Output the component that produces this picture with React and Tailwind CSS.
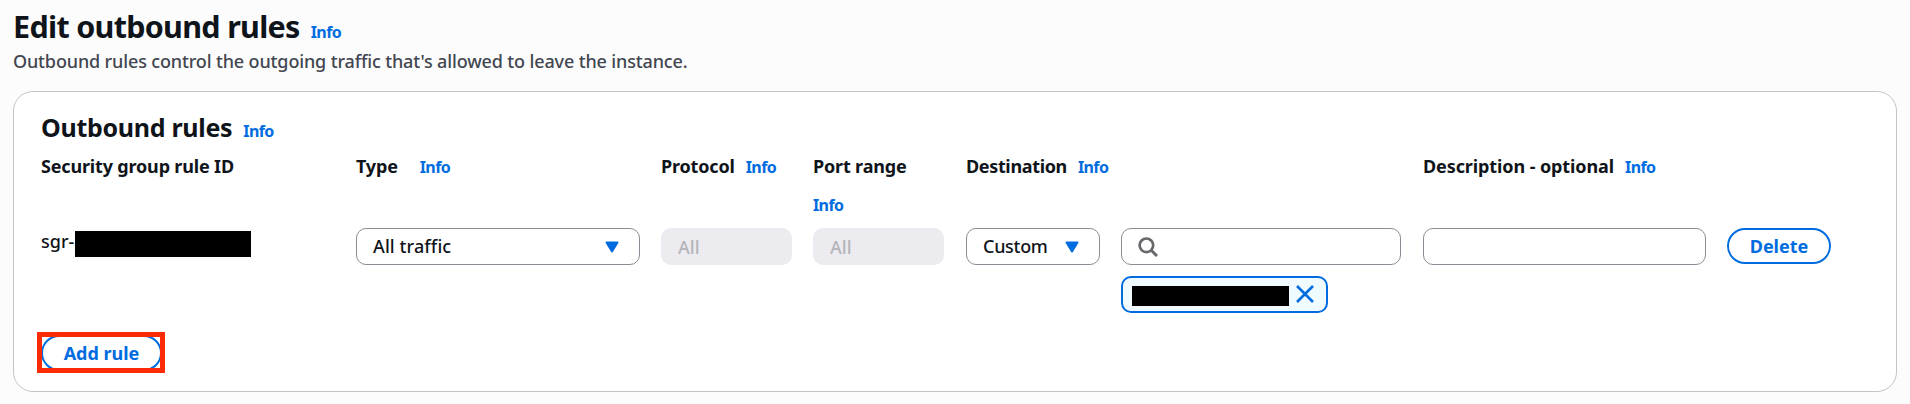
import React from "react";

function Info() {
  return (
    <a className="text-[16px] leading-[24px] font-bold tracking-[-0.6px] text-[#006ce0]">Info</a>
  );
}

function HeaderCell({ label, gap = "gap-x-[11px]", tracking = "tracking-[-0.17px]", className = "" }) {
  return (
    <div className={`flex flex-wrap content-start items-baseline gap-y-[8px] whitespace-nowrap ${gap} ${className}`}>
      <span className={`text-[18px] leading-[38px] font-bold ${tracking}`}>{label}</span>
      <Info />
    </div>
  );
}

function Caret() {
  return (
    <svg className="h-[12px] w-[14px] shrink-0" viewBox="0 0 14 12" aria-hidden="true">
      <path d="M1.5 1.5h11L7 10.5z" fill="#006ce0" stroke="#006ce0" strokeWidth="2" strokeLinejoin="round" />
    </svg>
  );
}

function Select({ value, className = "", tracking = "" }) {
  return (
    <div className={`flex h-[37px] items-center justify-between rounded-[10px] border border-[#8c8c94] bg-white pl-[16px] ${className}`}>
      <span className={`text-[18px] font-medium ${tracking}`}>{value}</span>
      <Caret />
    </div>
  );
}

function DisabledInput({ value }) {
  return (
    <div className="flex h-[37px] w-[131px] items-center rounded-[10px] bg-[#ebebf0] pt-px pl-[17px] text-[18px] font-medium text-[#b4b4bb]">
      {value}
    </div>
  );
}

export default function App() {
  return (
    <main className="flex h-[404px] w-[1910px] flex-col overflow-hidden bg-[#fcfcfc] pt-[8px] pl-[13px] font-['Noto_Sans',sans-serif] text-[#0f141a]">
      <h1 className="flex items-baseline gap-[11px] text-[30.5px] leading-[36px] font-bold tracking-[-0.7px]">
        Edit outbound rules
        <Info />
      </h1>
      <p className="mt-[5px] text-[18px] leading-[24px] font-medium tracking-[-0.14px] text-[#424650]">
        Outbound rules control the outgoing traffic that's allowed to leave the instance.
      </p>

      <section className="mt-[18px] h-[301px] w-[1884px] rounded-[20px] border border-[#c4c4c8] bg-white pt-[19px] pl-[27px]">
        <h2 className="flex items-baseline gap-[11px] text-[25px] leading-[32px] font-bold tracking-[-0.3px]">
          Outbound rules
          <Info />
        </h2>

        <div className="mt-[4px] grid grid-cols-[294px_284px_131px_132px_134px_281px_283px_104px] grid-rows-[81px_104px] gap-x-[21px]">
          <div className="text-[18px] leading-[38px] font-bold tracking-[-0.17px]">Security group rule ID</div>
          <HeaderCell label="Type" gap="gap-x-[22px]" />
          <HeaderCell label="Protocol" />
          <HeaderCell label="Port range" />
          <HeaderCell label="Destination" tracking="tracking-[-0.35px]" className="col-span-2" />
          <HeaderCell label="Description - optional" tracking="tracking-[-0.1px]" className="col-span-2" />

          <div className="flex items-start text-[18px] leading-[26px] font-medium">
            <span className="w-[34px]">sgr-</span>
            <span className="mt-[3px] h-[26px] w-[176px] bg-black" />
          </div>
          <Select value="All traffic" className="pr-[20px]" tracking="tracking-[0.1px]" />
          <DisabledInput value="All" />
          <DisabledInput value="All" />
          <Select value="Custom" className="pr-[20px]" tracking="tracking-[-0.3px]" />
          <div>
            <div className="flex h-[37px] w-[280px] items-center rounded-[10px] border border-[#8c8c94] bg-white pl-[16px]">
              <svg className="size-[20px]" viewBox="0 0 20 20" fill="none" stroke="#66686c" aria-hidden="true">
                <circle cx="8.4" cy="8.3" r="6.8" strokeWidth="2.7" />
                <path d="M13 13l6 6" strokeWidth="3" />
              </svg>
            </div>
            <div className="mt-[11px] flex h-[37px] w-[207px] items-start rounded-[10px] border-2 border-[#006ce0] bg-[#f0fbff] pl-[9px]">
              <span className="mt-[8px] h-[20px] w-[157px] bg-black" />
              <svg className="mt-[7px] ml-[7px] size-[18px]" viewBox="0 0 18 18" fill="none" stroke="#006ce0" strokeWidth="2.6" aria-hidden="true">
                <path d="M1 1l16 16M17 1L1 17" />
              </svg>
            </div>
          </div>
          <div className="h-[37px] rounded-[10px] border border-[#8c8c94] bg-white" />
          <button className="h-[36px] rounded-full border-2 border-[#006ce0] bg-white pt-px text-[18px] font-bold text-[#006ce0]">
            Delete
          </button>
        </div>

        <div className="-ml-[4px] flex h-[41px] w-[128px] items-center justify-center overflow-hidden border-[5px] border-[#fa2b05]">
          <button className="h-[36px] w-[121px] shrink-0 rounded-full border-2 border-[#006ce0] bg-white pt-px pl-px text-[18px] font-bold text-[#006ce0]">
            Add rule
          </button>
        </div>
      </section>
    </main>
  );
}
